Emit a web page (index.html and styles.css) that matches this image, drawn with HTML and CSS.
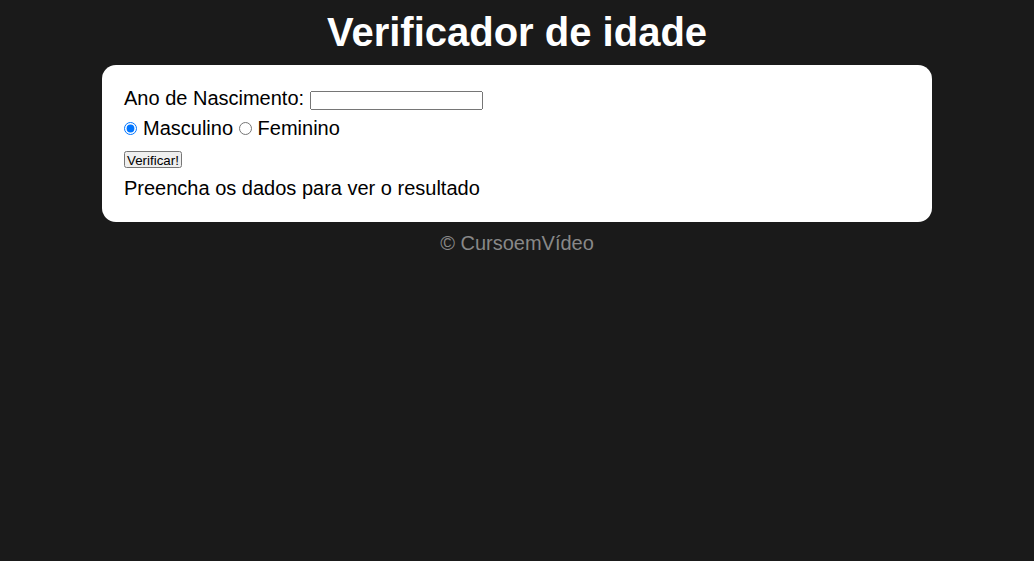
FILE: index.html
```html
<!DOCTYPE html>
<html lang="pt-BR">
<head>
<meta charset="UTF-8">
<title>Verificador de idade</title>
<link rel="stylesheet" href="styles.css">
</head>
<body>
<header class="top">
<h1 class="title">Verificador de idade</h1>
</header>
<section class="card">
<div class="row">Ano de Nascimento: <input type="number" class="year"></div>
<div class="row"><input type="radio" name="sex" id="masc" class="radio" checked><label for="masc">Masculino</label> <input type="radio" name="sex" id="fem" class="radio"><label for="fem">Feminino</label></div>
<div class="btn-row"><input type="button" value="Verificar!" class="btn"></div>
<div class="row">Preencha os dados para ver o resultado</div>
</section>
<footer class="foot">&copy; CursoemVídeo</footer>
</body>
</html>
```
FILE: styles.css
```css
body {
  margin: 0;
  background: #1a1a1a;
  font-family: Arial, "Liberation Sans", sans-serif;
  font-size: 20px;
}
.top {
  color: #fff;
  text-align: center;
}
.title {
  margin: 0;
  padding-top: 9px;
  font-size: 40px;
  line-height: 46px;
}
.card {
  background: #fff;
  border-radius: 14px;
  width: 786px;
  margin: 10px auto 0;
  padding: 18px 22px 19px;
  color: #000;
}
.row {
  line-height: 30px;
  height: 30px;
}
.year {
  box-sizing: border-box;
  width: 173px;
  height: 19px;
  font-size: 13.33px;
  vertical-align: 0;
}
.radio {
  margin: 3px 6px 0 0;
}
.btn-row {
  box-sizing: border-box;
  height: 30px;
  padding-top: 8px;
  display: flex;
  align-items: flex-start;
}
.btn {
  font-family: Arial, "Liberation Sans", sans-serif;
  font-size: 13.33px;
  padding: 0 1px;
  height: 17px;
  line-height: 13px;
}
.foot {
  text-align: center;
  color: #888;
  margin-top: 10px;
  line-height: 23px;
}
```
